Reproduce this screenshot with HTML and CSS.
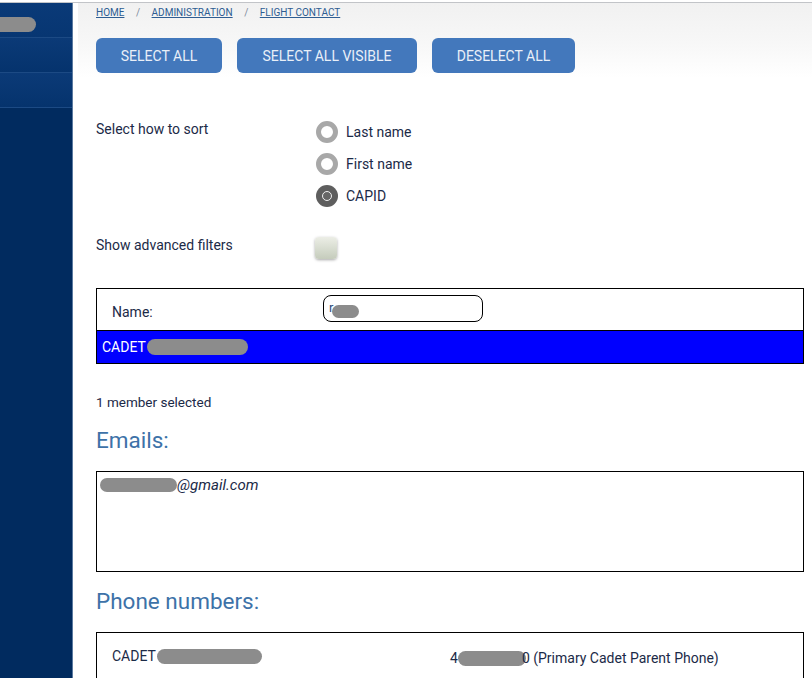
FILE: index.html
```html
<!DOCTYPE html>
<html lang="en">
<head>
<meta charset="utf-8">
<title>Flight contact</title>
<link rel="stylesheet" href="styles.css">
</head>
<body>
<div class="frame">
  <aside class="sidebar">
    <div class="nav-item first"><span class="redact nav-redact"></span></div>
    <div class="nav-item"></div>
    <div class="nav-item"></div>
  </aside>
  <main class="main">
    <nav class="crumbs">
      <a class="crumb" href="#">Home</a><span class="sep">/</span><a class="crumb" href="#">Administration</a><span class="sep">/</span><a class="crumb" href="#">Flight contact</a>
    </nav>
    <div class="buttons">
      <button class="btn w1">SELECT ALL</button>
      <button class="btn w2">SELECT ALL VISIBLE</button>
      <button class="btn w3">DESELECT ALL</button>
    </div>

    <div class="form-row sort-row">
      <div class="form-label">Select how to sort</div>
      <div class="radios">
        <label class="radio-line"><span class="radio"></span>Last name</label>
        <label class="radio-line"><span class="radio"></span>First name</label>
        <label class="radio-line"><span class="radio checked"></span>CAPID</label>
      </div>
    </div>

    <div class="form-row adv-row">
      <div class="form-label">Show advanced filters</div>
      <span class="checkbox"></span>
    </div>

    <div class="list-box">
      <div class="name-row">
        <span class="name-label">Name:</span>
        <div class="name-input"><span class="typed">r</span><span class="redact input-redact"></span></div>
      </div>
      <div class="selected-row">CADET <span class="redact sel-redact"></span></div>
    </div>

    <p class="count">1 member selected</p>

    <h2 class="heading">Emails:</h2>
    <div class="email-box"><span class="email"><span class="redact email-redact"></span>@gmail.com</span></div>

    <h2 class="heading phone-heading">Phone numbers:</h2>
    <div class="phone-box">
      <div class="phone-row">
        <span class="phone-name">CADET <span class="redact phone-name-redact"></span></span>
        <span class="phone-num">4<span class="redact phone-redact"></span>0 (Primary Cadet Parent Phone)</span>
      </div>
    </div>
  </main>
</div>
</body>
</html>
```

FILE: styles.css
```css
html, body {
  margin: 0;
  padding: 0;
  background: #fff;
}
body {
  padding-top: 2px;
  font-family: Roboto, "Liberation Sans", Arial, sans-serif;
  color: #1b2a47;
  overflow: hidden;
}
.frame {
  display: flex;
  border-top: 1px solid #c2c4c8;
  height: 675px;
}
.sidebar {
  width: 72px;
  flex: none;
  background: #012b5f;
  border-right: 1px solid #5b7aa0;
}
.nav-item {
  height: 34px;
  border-bottom: 1px solid #1c4a84;
  background: linear-gradient(#0b3a77, #05336d);
  position: relative;
}
.nav-item.first {
  background: linear-gradient(#0a3a78, #073672);
}
.redact {
  display: inline-block;
  background: #8c8c8c;
  border-radius: 8px;
  vertical-align: middle;
}
.nav-redact {
  position: absolute;
  left: 0;
  top: 14px;
  width: 36px;
  height: 15px;
  border-radius: 0 8px 8px 0;
}
.main {
  flex: 1;
  padding: 0 8px 0 23px;
  background: linear-gradient(#f1f1f1 0, #f7f7f7 40px, #fff 75px) no-repeat;
  background-position: 5px 0;
}
.crumbs {
  height: 20px;
  line-height: 20px;
  font-size: 10px;
  text-transform: uppercase;
}
.crumb {
  color: #2e5d92;
  text-decoration: underline;
}
.sep {
  color: #7d8a9c;
  margin: 0 11.5px;
}
.buttons {
  display: flex;
  gap: 15px;
  margin-top: 15px;
}
.btn {
  height: 35px;
  border: none;
  border-radius: 6px;
  background: #4378bc;
  color: #e9eff8;
  font-family: Roboto, "Liberation Sans", Arial, sans-serif;
  font-size: 14px;
  padding: 0;
}
.w1 { width: 126px; }
.w2 { width: 180px; }
.w3 { width: 143px; }

.form-row {
  display: flex;
}
.form-label {
  width: 220px;
  font-size: 14px;
  line-height: 20px;
  padding-top: 3px;
}
.sort-row {
  margin-top: 43px;
}
.radios {
  display: flex;
  flex-direction: column;
}
.radio-line {
  height: 32px;
  display: flex;
  align-items: center;
  gap: 8px;
  font-size: 14px;
}
.radio {
  width: 22px;
  height: 22px;
  box-sizing: border-box;
  border-radius: 50%;
  border: 5px solid #a8a8a8;
  background: #fff;
}
.radio.checked {
  border: none;
  background: #5e5e5e;
  display: flex;
  align-items: center;
  justify-content: center;
}
.radio.checked::after {
  content: "";
  width: 10px;
  height: 10px;
  box-sizing: border-box;
  border-radius: 50%;
  border: 1px solid #f0f0f0;
  background: #666;
}
.adv-row {
  margin-top: 17px;
  height: 32px;
  align-items: flex-start;
}
.adv-row .form-label {
  padding-top: 6px;
}
.checkbox {
  width: 22px;
  height: 22px;
  margin-top: 8px;
  margin-left: -1px;
  border-radius: 4px;
  background: linear-gradient(#eceee6, #c5ccbc);
  box-shadow: 0 1px 3px rgba(0, 0, 0, 0.35);
}
.list-box {
  margin-top: 27px;
  border: 1px solid #000;
}
.name-row {
  height: 41px;
  border-bottom: 1px solid #000;
  display: flex;
  align-items: flex-start;
}
.name-label {
  width: 211px;
  padding-left: 15px;
  font-size: 14px;
  line-height: 20px;
  margin-top: 13px;
}
.name-input {
  position: relative;
  width: 160px;
  height: 27px;
  box-sizing: border-box;
  margin-top: 6px;
  border: 1px solid #000;
  border-radius: 8px;
  background: #fff;
  font-size: 13px;
  line-height: 24px;
  padding-left: 5px;
}
.typed {
  color: #2a4a7a;
}
.input-redact {
  position: absolute;
  left: 8px;
  top: 9px;
  width: 27px;
  height: 13px;
}
.selected-row {
  height: 32px;
  background: #0000ff;
  color: #fff;
  font-size: 14px;
  line-height: 32px;
  padding-left: 5px;
}
.sel-redact {
  width: 101px;
  height: 16px;
  margin-left: -2px;
  margin-top: -2px;
}
.count {
  margin: 28px 0 0;
  font-size: 13.5px;
  line-height: 20px;
}
.heading {
  margin: 14px 0 0;
  font-weight: 400;
  font-size: 22.5px;
  line-height: 28px;
  color: #3d72a8;
}
.email-box {
  margin-top: 17px;
  border: 1px solid #000;
  padding: 3px 0 0 3px;
  height: 96px;
}
.email {
  font-style: italic;
  font-size: 15px;
  line-height: 18px;
}
.email-redact {
  width: 77px;
  height: 14px;
  margin-top: -3px;
}
.phone-heading {
  margin-top: 15px;
}
.phone-box {
  margin-top: 17px;
  border: 1px solid #000;
  height: 80px;
}
.phone-row {
  display: flex;
  padding: 13px 0 0 15px;
  line-height: 20px;
}
.phone-name {
  width: 338px;
  font-size: 14px;
}
.phone-name-redact {
  width: 105px;
  height: 15px;
  margin-left: -2px;
  margin-top: -2px;
}
.phone-num {
  font-size: 14px;
  margin-top: 2px;
}
.phone-redact {
  width: 68px;
  height: 15px;
  margin-right: -4px;
  margin-top: -2px;
}
```
